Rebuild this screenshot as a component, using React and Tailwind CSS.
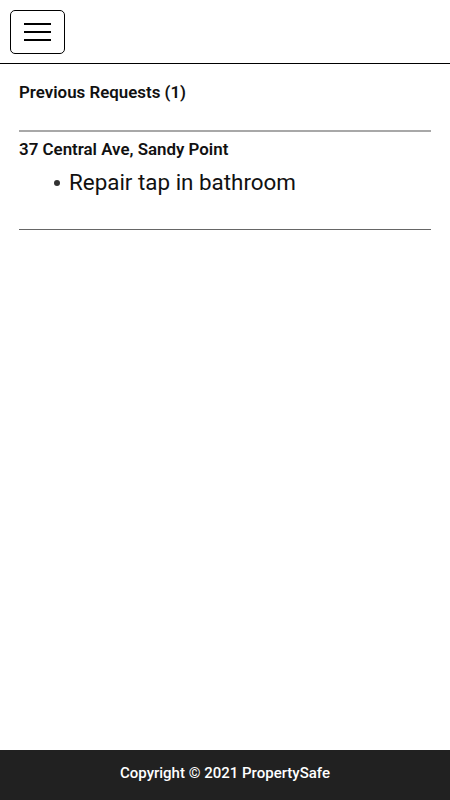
import React from "react";

const requests = [
  {
    address: "37 Central Ave, Sandy Point",
    items: ["Repair tap in bathroom"],
  },
];

const App = () => {
  return (
    <div
      className="min-h-screen flex flex-col bg-white text-black"
      style={{ fontFamily: "Roboto, 'Liberation Sans', sans-serif" }}
    >
      {/* Header */}
      <header className="h-[64px] border-b border-black px-[10px] pt-[10px]">
        <button className="w-[55px] h-[44px] border border-black rounded-[5px] flex flex-col items-center justify-center gap-[6px]">
          <span className="block w-[27px] h-[2px] bg-black" />
          <span className="block w-[27px] h-[2px] bg-black" />
          <span className="block w-[27px] h-[2px] bg-black" />
        </button>
      </header>

      {/* Content */}
      <main className="flex-1 px-[19px] pt-[18px]">
        <h2 className="text-[16.9px] font-semibold leading-[21px] mb-[27px] text-[#111]">
          Previous Requests ({requests.length})
        </h2>
        {requests.map((req) => (
          <div key={req.address}>
            <hr className="border-0 h-[2px] bg-[#a8a8a8]" />
            <h3 className="text-[16.9px] font-semibold leading-[21px] mt-[7px] text-[#111]">
              {req.address}
            </h3>
            <ul className="pl-[35px] mt-[8px] mb-[33px] text-[22.4px] leading-[28px] text-[#111]">
              {req.items.map((item) => (
                <li key={item} className="flex items-center">
                  <span className="w-[6px] h-[6px] rounded-full bg-[#333] mr-[9px] mt-[2px]" />
                  {item}
                </li>
              ))}
            </ul>
          </div>
        ))}
        <hr className="border-0 h-[1px] bg-[#666666]" />
      </main>

      {/* Footer */}
      <footer className="h-[50px] bg-[#212121] flex items-center justify-center pb-[3px]">
        <p className="text-white text-[15px] font-medium">
          Copyright © 2021 PropertySafe
        </p>
      </footer>
    </div>
  );
};

export default App;
